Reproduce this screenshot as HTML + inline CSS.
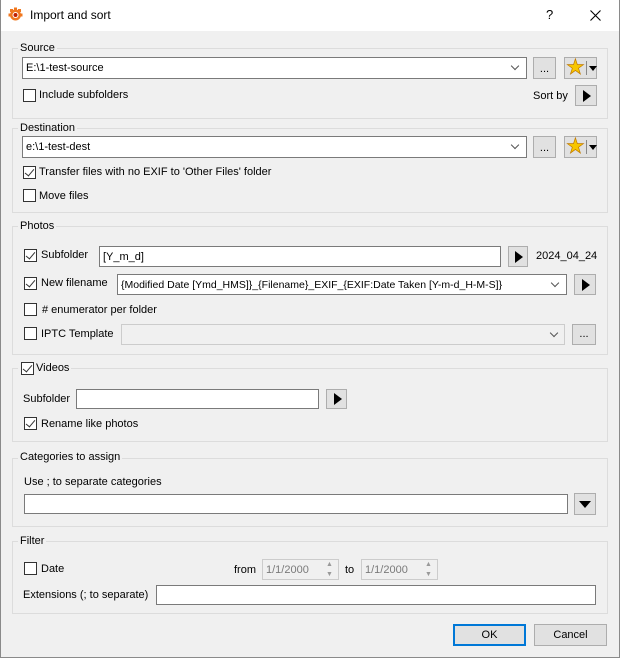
<!DOCTYPE html>
<html><head><style>
*{box-sizing:border-box;margin:0;padding:0}
body{width:620px;height:658px;background:#f0f0f0;font-family:"Liberation Sans",sans-serif;font-size:11px;color:#000;position:relative;overflow:hidden}
.a{position:absolute}
.win{position:absolute;left:0;top:0;width:620px;height:658px;border:1px solid #8a8a8a;border-top:none}
.title{position:absolute;left:0;top:0;width:620px;height:31px;background:#fff}
.grp{position:absolute;border:1px solid #dcdcdc}
.lbl{position:absolute;background:#f0f0f0;padding:0 2px;line-height:13px}
.t{position:absolute;line-height:13px;white-space:nowrap}
.in{position:absolute;background:#fff;border:1px solid #7a7a7a;display:flex;align-items:center;padding-left:3px;white-space:nowrap;overflow:hidden}
.dis{background:#f0f0f0;border-color:#cccccc;color:#7a7a7a}
.cb{position:absolute;width:13px;height:13px;border:1px solid #333;background:#fff}
.cb.on::after{content:"";position:absolute;left:3px;top:0px;width:4px;height:8px;border:solid #333;border-width:0 1.3px 1.3px 0;transform:rotate(40deg)}
.btn{position:absolute;background:#e1e1e1;border:1px solid #adadad;text-align:center}
.arr{position:absolute;left:50%;top:50%;margin-left:-3px;margin-top:-6px;width:0;height:0;border-left:8px solid #000;border-top:6px solid transparent;border-bottom:6px solid transparent}
.dn{position:absolute;width:0;height:0;border-top:7px solid #000;border-left:6px solid transparent;border-right:6px solid transparent}
.chev{position:absolute;width:6px;height:6px;border:solid #555;border-width:0 1px 1px 0;transform:rotate(45deg)}
.star{position:absolute;left:1px;top:-1px;color:#f7c600;font-size:21px;line-height:22px;-webkit-text-stroke:0.7px #c07a00}
</style></head><body>
<div class="title">
 <svg class="a" style="left:8px;top:7px" width="15" height="15" viewBox="0 0 15 15"><g fill="#f07820"><circle cx="7.5" cy="8" r="5.5"/><rect x="6" y="0.5" width="3" height="4"/><rect x="0.5" y="6.5" width="4" height="3"/><rect x="10.5" y="6.5" width="4" height="3"/><rect x="2" y="2" width="3" height="3"/><rect x="10" y="2" width="3" height="3"/></g><circle cx="7.5" cy="8" r="3" fill="#fff"/><circle cx="7.5" cy="8" r="2" fill="#c02000"/></svg>
 <div class="t" style="left:30px;top:9px;font-size:12px">Import and sort</div>
 <div class="t" style="left:546px;top:8px;font-size:13px">?</div>
 <svg class="a" style="left:590px;top:10px" width="11" height="11"><path d="M0.5 0.5L10.5 10.5M10.5 0.5L0.5 10.5" stroke="#000" stroke-width="1.1"/></svg>
</div>
<div class="win"></div>

<!-- Source -->
<div class="grp" style="left:12px;top:48px;width:596px;height:71px"></div>
<div class="lbl" style="left:18px;top:42px">Source</div>
<div class="in" style="left:22px;top:57px;width:505px;height:22px">E:\1-test-source</div>
<div class="chev" style="left:512px;top:63px"></div>
<div class="btn" style="left:533px;top:57px;width:23px;height:22px;line-height:22px">...</div>
<div class="btn" style="left:564px;top:57px;width:33px;height:22px"><span class="star">★</span><div style="position:absolute;left:21px;top:3px;width:1px;height:14px;background:#888"></div><div class="dn" style="left:24px;top:8px;border-top-width:5px;border-left-width:4px;border-right-width:4px"></div></div>
<div class="cb" style="left:23px;top:89px"></div>
<div class="t" style="left:39px;top:89px">Include subfolders</div>
<div class="t" style="left:533px;top:90px">Sort by</div>
<div class="btn" style="left:575px;top:85px;width:22px;height:21px"><div class="arr"></div></div>

<!-- Destination -->
<div class="grp" style="left:12px;top:128px;width:596px;height:85px"></div>
<div class="lbl" style="left:18px;top:122px">Destination</div>
<div class="in" style="left:22px;top:136px;width:505px;height:22px">e:\1-test-dest</div>
<div class="chev" style="left:512px;top:142px"></div>
<div class="btn" style="left:533px;top:136px;width:23px;height:22px;line-height:22px">...</div>
<div class="btn" style="left:564px;top:136px;width:33px;height:22px"><span class="star">★</span><div style="position:absolute;left:21px;top:3px;width:1px;height:14px;background:#888"></div><div class="dn" style="left:24px;top:8px;border-top-width:5px;border-left-width:4px;border-right-width:4px"></div></div>
<div class="cb on" style="left:23px;top:166px"></div>
<div class="t" style="left:39px;top:166px">Transfer files with no EXIF to 'Other Files' folder</div>
<div class="cb" style="left:23px;top:189px"></div>
<div class="t" style="left:39px;top:190px">Move files</div>

<!-- Photos -->
<div class="grp" style="left:12px;top:226px;width:596px;height:129px"></div>
<div class="lbl" style="left:18px;top:220px">Photos</div>
<div class="cb on" style="left:24px;top:249px"></div>
<div class="t" style="left:41px;top:249px">Subfolder</div>
<div class="in" style="left:99px;top:246px;width:402px;height:21px">[Y_m_d]</div>
<div class="btn" style="left:508px;top:246px;width:20px;height:21px"><div class="arr"></div></div>
<div class="t" style="left:536px;top:250px">2024_04_24</div>
<div class="cb on" style="left:24px;top:277px"></div>
<div class="t" style="left:41px;top:277px">New filename</div>
<div class="in" style="left:117px;top:274px;width:450px;height:21px;font-size:10.5px">{Modified Date [Ymd_HMS]}_{Filename}_EXIF_{EXIF:Date Taken [Y-m-d_H-M-S]}</div>
<div class="chev" style="left:552px;top:280px"></div>
<div class="btn" style="left:574px;top:274px;width:22px;height:21px"><div class="arr"></div></div>
<div class="cb" style="left:24px;top:303px"></div>
<div class="t" style="left:42px;top:304px"># enumerator per folder</div>
<div class="cb" style="left:24px;top:327px"></div>
<div class="t" style="left:41px;top:328px">IPTC Template</div>
<div class="in dis" style="left:121px;top:324px;width:444px;height:21px"></div>
<div class="chev" style="left:551px;top:330px"></div>
<div class="btn" style="left:572px;top:324px;width:24px;height:21px;line-height:19px">...</div>

<!-- Videos -->
<div class="grp" style="left:12px;top:368px;width:596px;height:74px"></div>
<div class="lbl" style="left:18px;top:362px;padding-left:18px">Videos</div>
<div class="cb on" style="left:21px;top:362px"></div>
<div class="t" style="left:23px;top:393px">Subfolder</div>
<div class="in" style="left:76px;top:389px;width:243px;height:20px"></div>
<div class="btn" style="left:326px;top:389px;width:21px;height:20px"><div class="arr"></div></div>
<div class="cb on" style="left:24px;top:417px"></div>
<div class="t" style="left:41px;top:418px">Rename like photos</div>

<!-- Categories -->
<div class="grp" style="left:12px;top:458px;width:596px;height:69px"></div>
<div class="lbl" style="left:18px;top:451px">Categories to assign</div>
<div class="t" style="left:24px;top:476px">Use ; to separate categories</div>
<div class="in" style="left:24px;top:494px;width:544px;height:20px"></div>
<div class="btn" style="left:574px;top:493px;width:22px;height:22px"><div class="dn" style="left:4px;top:7px"></div></div>

<!-- Filter -->
<div class="grp" style="left:12px;top:541px;width:596px;height:73px"></div>
<div class="lbl" style="left:18px;top:535px">Filter</div>
<div class="cb" style="left:24px;top:562px"></div>
<div class="t" style="left:41px;top:563px">Date</div>
<div class="t" style="left:234px;top:564px">from</div>
<div class="in dis" style="left:262px;top:559px;width:77px;height:21px">1/1/2000</div>
<div class="t" style="left:345px;top:564px">to</div>
<div class="in dis" style="left:361px;top:559px;width:77px;height:21px">1/1/2000</div>
<div class="t" style="left:326px;top:558px;color:#999;font-size:7px">▲</div>
<div class="t" style="left:326px;top:568px;color:#999;font-size:7px">▼</div>
<div class="t" style="left:425px;top:558px;color:#999;font-size:7px">▲</div>
<div class="t" style="left:425px;top:568px;color:#999;font-size:7px">▼</div>
<div class="t" style="left:23px;top:589px">Extensions (; to separate)</div>
<div class="in" style="left:156px;top:585px;width:440px;height:20px"></div>

<div class="btn" style="left:453px;top:624px;width:73px;height:22px;line-height:19px;border:2px solid #0078d7">OK</div>
<div class="btn" style="left:534px;top:624px;width:73px;height:22px;line-height:20px">Cancel</div>
</body></html>
